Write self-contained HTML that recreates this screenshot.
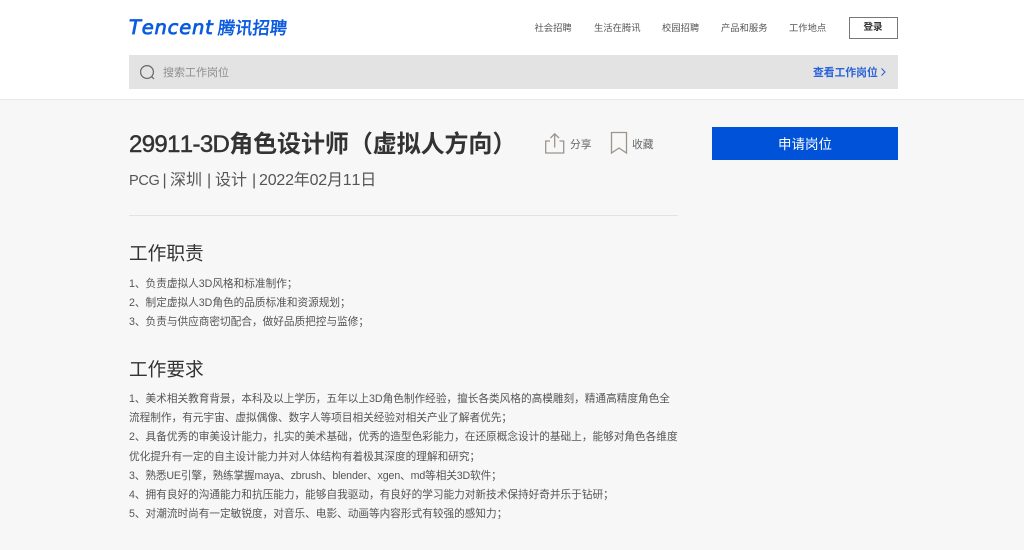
<!DOCTYPE html>
<html lang="zh">
<head>
<meta charset="utf-8">
<style>
html,body{margin:0;padding:0;width:1024px;height:550px;overflow:hidden;background:#f7f7f7;}
body{position:relative;font-family:"Liberation Sans","Noto Sans CJK SC",sans-serif;color:#555;font-kerning:none;}
.t{position:absolute;white-space:nowrap;line-height:20px;height:20px;}
.hd{position:absolute;left:0;top:0;width:1024px;height:99px;background:#fff;border-bottom:1px solid #e9e9e9;}
.nav{font-size:9.3px;color:#555;}
.b{font-size:10.65px;left:129px;color:#555;}
.h{font-size:18.7px;left:129px;color:#333;}
.s{font-size:16px;color:#555;top:171px;}
</style>
</head>
<body>
<div class="hd"></div>

<div class="t" style="left:129px;top:18px;font-family:'DejaVu Sans',sans-serif;font-size:19.5px;font-style:italic;color:#0a5be0;letter-spacing:.8px;-webkit-text-stroke:.8px #0a5be0;">Tencent</div>
<div class="t" style="left:218px;top:18px;font-size:17.3px;color:#0a5be0;-webkit-text-stroke:.55px #0a5be0;transform:skewX(-6deg);">腾讯招聘</div>

<div class="t nav" style="left:534.5px;top:18px;">社会招聘</div>
<div class="t nav" style="left:594px;top:18px;">生活在腾讯</div>
<div class="t nav" style="left:662px;top:18px;">校园招聘</div>
<div class="t nav" style="left:721px;top:18px;">产品和服务</div>
<div class="t nav" style="left:789px;top:18px;">工作地点</div>
<div style="position:absolute;left:849px;top:17px;width:47px;height:20px;border:1px solid #777;background:#fff;"></div>
<div class="t" style="left:863.5px;top:18px;font-size:9.5px;color:#333;font-weight:bold;">登录</div>

<div style="position:absolute;left:129px;top:55px;width:769px;height:34px;background:#e3e3e3;"></div>
<svg style="position:absolute;left:138px;top:63px;" width="20" height="20" viewBox="0 0 20 20" fill="none" stroke="#666" stroke-width="1.2"><circle cx="9" cy="9" r="6.4"/><path d="M13.6 13.6L16 16"/></svg>
<div class="t" style="left:163px;top:63px;font-size:11px;color:#8f8f8f;">搜索工作岗位</div>
<div class="t" style="left:813px;top:63px;font-size:10.8px;font-weight:bold;color:#2a62d8;">查看工作岗位</div>
<svg style="position:absolute;left:880px;top:67px;" width="7" height="10" viewBox="0 0 7 10" fill="none" stroke="#2a62d8" stroke-width="1.1"><path d="M1.5 1.5L5 5L1.5 8.5"/></svg>

<div class="t" style="left:129px;top:135px;font-size:24px;font-weight:bold;color:#333;"><span style="font-weight:normal;-webkit-text-stroke:.45px #333;letter-spacing:-.65px;">29911-3D</span><span style="letter-spacing:-.08px;">角色设计师（虚拟人方向）</span></div>

<div class="t s" style="left:129px;font-size:14.5px;letter-spacing:-.3px;">PCG</div>
<div class="t s" style="left:162.5px;">|</div>
<div class="t s" style="left:170px;">深圳</div>
<div class="t s" style="left:207px;">|</div>
<div class="t s" style="left:215px;">设计</div>
<div class="t s" style="left:252px;">|</div>
<div class="t s" style="left:259px;letter-spacing:-.2px;">2022年02月11日</div>

<svg style="position:absolute;left:544px;top:132px;" width="22" height="23" viewBox="0 0 22 23" fill="none" stroke="#9c948d" stroke-width="1.3"><path d="M6 9H1.7V21H19.7V9H15.5"/><path d="M10.7 15.5V2M6.5 6L10.7 1.8L15 6"/></svg>
<div class="t" style="left:570px;top:135px;font-size:10.8px;color:#666;">分享</div>
<svg style="position:absolute;left:610px;top:131px;" width="18" height="24" viewBox="0 0 18 24" fill="none" stroke="#9c948d" stroke-width="1.3"><path d="M1.5 1.5H16.5V22L9 17L1.5 22Z"/></svg>
<div class="t" style="left:632px;top:135px;font-size:10.8px;color:#666;">收藏</div>

<div style="position:absolute;left:712px;top:127px;width:186px;height:33px;background:#0052d9;"></div>
<div class="t" style="left:778px;top:135px;font-size:13.5px;color:#fff;">申请岗位</div>

<div style="position:absolute;left:129px;top:215px;width:549px;height:1px;background:#e2e2e2;"></div>

<div class="t h" style="top:244px;">工作职责</div>
<div class="t b" style="top:274px;">1、负责虚拟人3D风格和标准制作；</div>
<div class="t b" style="top:293px;">2、制定虚拟人3D角色的品质标准和资源规划；</div>
<div class="t b" style="top:312px;">3、负责与供应商密切配合，做好品质把控与监修；</div>

<div class="t h" style="top:360px;">工作要求</div>
<div class="t b" style="top:389px;">1、美术相关教育背景，本科及以上学历，五年以上3D角色制作经验，擅长各类风格的高模雕刻，精通高精度角色全</div>
<div class="t b" style="top:408px;">流程制作，有元宇宙、虚拟偶像、数字人等项目相关经验对相关产业了解者优先；</div>
<div class="t b" style="top:427px;">2、具备优秀的审美设计能力，扎实的美术基础，优秀的造型色彩能力，在还原概念设计的基础上，能够对角色各维度</div>
<div class="t b" style="top:447px;">优化提升有一定的自主设计能力并对人体结构有着极其深度的理解和研究；</div>
<div class="t b" style="top:466px;letter-spacing:-.12px;">3、熟悉UE引擎，熟练掌握maya、zbrush、blender、xgen、md等相关3D软件；</div>
<div class="t b" style="top:485px;">4、拥有良好的沟通能力和抗压能力，能够自我驱动，有良好的学习能力对新技术保持好奇并乐于钻研；</div>
<div class="t b" style="top:504px;">5、对潮流时尚有一定敏锐度，对音乐、电影、动画等内容形式有较强的感知力；</div>
</body>
</html>
